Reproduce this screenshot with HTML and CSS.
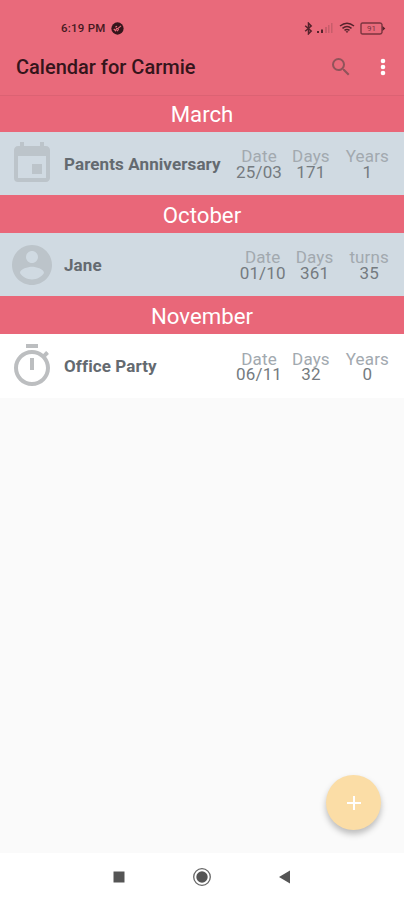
FILE: index.html
```html
<!DOCTYPE html>
<html lang="en">
<head>
    <meta charset="UTF-8">
    <meta name="viewport" content="width=device-width, initial-scale=1.0">
    <title>Calendar for Carmie</title>
    <link rel="stylesheet" href="styles.css">
</head>
<body>
    <header class="header">
        <div class="status-bar">
            <span class="time">6:19 PM</span>
            <svg class="badge" viewBox="0 0 14 14" width="13" height="13">
                <circle cx="7" cy="7" r="6.6" fill="#35151b"/>
                <path d="M3 7.5l2 1.8 1-2.3 1.5 0L10.8 4.2M6.5 9.8l1.8-2.2M4.8 5.5l1.7-.9" fill="none" stroke="#e96a7b" stroke-width="1.3"/>
            </svg>
            <div class="status-icons">
                <svg viewBox="0 0 9 13" width="9" height="13" fill="none" stroke="#54222b" stroke-width="1.5">
                    <path d="M1.2 3.8l6 5.2L4.5 11.8V1.2L7.2 4l-6 5.2"/>
                </svg>
                <svg class="signal" viewBox="0 0 16 12" width="16" height="12">
                    <path d="M0 9h2v2H0zM4 7.500h2V11H4z" fill="#54222b"/>
                    <path d="M8 5h2v6H8zM11 3h1.500v8H11zM14 1h1.500v10H14z" fill="#c85d6b"/>
                </svg>
                <svg class="wifi" viewBox="0 0 16 12" width="16" height="12" fill="none" stroke="#54222b" stroke-width="1.5">
                    <path d="M1 4Q8-1.500 15 4M3.500 6.300Q8 2.800 12.500 6.300M5.500 8.400Q8 6.500 10.500 8.400"/>
                    <path d="M6.500 9.300h3L8 11z" fill="#54222b" stroke="none"/>
                </svg>
                <svg class="battery" viewBox="0 0 26 13" width="26" height="13">
                    <path d="M2.500 1h17.500q1.500 0 2 1.500v8q-.5 1.500-2 1.500H2.500Q1 12 1 10.500v-8Q1 1 2.500 1z" fill="none" stroke="#7b353f" stroke-width="1.4"/>
                    <path d="M22.500 4l2.800 2.500-2.800 2.500z" fill="#54222b"/>
                    <text x="11.500" y="9.400" text-anchor="middle" class="battery-level">91</text>
                </svg>
            </div>
        </div>
        <div class="toolbar">
            <h1>Calendar for Carmie</h1>
            <svg class="search" viewBox="0 0 24 24" width="24" height="24" fill="#91535a">
                <path d="M15.500 14h-.79l-.28-.27A6.471 6.471 0 0 0 16 9.500 6.500 6.500 0 1 0 9.500 16c1.610 0 3.090-.59 4.230-1.570l.27.28v.79l5 4.990L20.490 19l-4.990-5zm-6 0C7.010 14 5 11.990 5 9.500S7.010 5 9.500 5 14 7.010 14 9.500 11.990 14 9.500 14z"/>
            </svg>
            <svg class="more" viewBox="0 0 24 24" width="24" height="24" fill="#fff">
                <circle cx="12" cy="6" r="2.300"/>
                <circle cx="12" cy="12" r="2.300"/>
                <circle cx="12" cy="18" r="2.300"/>
            </svg>
        </div>
    </header>

    <main class="events">
        <h2 class="month first">March</h2>
        <div class="event">
            <svg class="icon" viewBox="0 0 24 24">
                <path d="M17 12h-5v5h5v-5zM16 1v2H8V1H6v2H5c-1.110 0-1.990.9-1.990 2L3 19a2 2 0 0 0 2 2h14c1.100 0 2-.9 2-2V5c0-1.100-.9-2-2-2h-1V1h-2zm3 18H5V8h14v11z"/>
            </svg>
            <span class="name">Parents Anniversary</span>
            <div class="stat date"><span>Date</span><b>25/03</b></div>
            <div class="stat days"><span>Days</span><b>171</b></div>
            <div class="stat"><span>Years</span><b>1</b></div>
        </div>

        <h2 class="month">October</h2>
        <div class="event">
            <svg class="icon" viewBox="0 0 24 24">
                <path d="M12 2C6.480 2 2 6.480 2 12s4.480 10 10 10 10-4.480 10-10S17.520 2 12 2zm0 3c1.660 0 3 1.340 3 3s-1.340 3-3 3-3-1.340-3-3 1.340-3 3-3zm0 14.200c-2.500 0-4.710-1.280-6-3.220.030-1.990 4-3.080 6-3.080 1.990 0 5.970 1.090 6 3.080-1.290 1.940-3.500 3.220-6 3.220z"/>
            </svg>
            <span class="name">Jane</span>
            <div class="stat date"><span>Date</span><b>01/10</b></div>
            <div class="stat days"><span>Days</span><b>361</b></div>
            <div class="stat"><span>turns</span><b>35</b></div>
        </div>

        <h2 class="month">November</h2>
        <div class="event upcoming">
            <svg class="icon" viewBox="0 0 24 24">
                <path d="M15 1H9v2h6V1zm-4 13h2V8h-2v6zm8.030-6.610l1.420-1.420c-.43-.51-.9-.99-1.410-1.410l-1.420 1.420A8.962 8.962 0 0 0 12 4c-4.970 0-9 4.030-9 9s4.020 9 9 9 9-4.030 9-9c0-2.120-.74-4.070-1.970-5.610zM12 20c-3.870 0-7-3.130-7-7s3.130-7 7-7 7 3.130 7 7-3.130 7-7 7z"/>
            </svg>
            <span class="name">Office Party</span>
            <div class="stat date"><span>Date</span><b>06/11</b></div>
            <div class="stat days"><span>Days</span><b>32</b></div>
            <div class="stat"><span>Years</span><b>0</b></div>
        </div>
    </main>

    <button class="add-button" aria-label="Add event">
        <svg viewBox="0 0 24 24" width="24" height="24" fill="none" stroke="#fff" stroke-width="2">
            <path d="M12 5v14M5 12h14"/>
        </svg>
    </button>

    <nav class="nav-bar">
        <svg viewBox="0 0 20 20" width="20" height="20">
            <path d="M4.500 4.500h11v11h-11z" fill="#555"/>
        </svg>
        <svg viewBox="0 0 20 20" width="20" height="20">
            <circle cx="10" cy="10" r="8.300" fill="none" stroke="#666" stroke-width="1.300"/>
            <circle cx="10" cy="10" r="5.700" fill="#555"/>
        </svg>
        <svg viewBox="0 0 20 20" width="20" height="20">
            <path d="M15 3.500v13L4 10z" fill="#555"/>
        </svg>
    </nav>
</body>
</html>
```

FILE: styles.css
```css
* {
    box-sizing: border-box;
}

body {
    margin: 0;
    height: 100vh;
    display: flex;
    flex-direction: column;
    font-family: Roboto, "Liberation Sans", sans-serif;
    background-color: #fafafa;
    overflow: hidden;
}

svg {
    display: block;
    flex-shrink: 0;
}

/* Header */
.header {
    height: 95px;
    padding-top: 17px;
    background-color: #e96a7b;
}

.status-bar {
    display: flex;
    align-items: center;
    height: 22px;
    padding: 0 18px 0 61px;
}

.time {
    width: 44px;
    font-size: 11.5px;
    font-weight: 500;
    letter-spacing: 0.25px;
    white-space: nowrap;
    color: #45191f;
}

.badge {
    margin-left: 6px;
}

.status-icons {
    display: flex;
    align-items: center;
    margin-left: auto;
}

.signal {
    margin-left: 4px;
}

.wifi {
    margin-left: 6px;
}

.battery {
    margin-left: 5px;
}

.battery-level {
    font-size: 8px;
    fill: #7b353f;
}

.toolbar {
    display: flex;
    align-items: center;
    height: 56px;
    padding: 0 9px 0 16px;
}

h1 {
    margin: 0;
    font-size: 20px;
    font-weight: 500;
    color: #35151b;
}

.search {
    margin-left: auto;
}

.more {
    margin-left: 18px;
}

/* Event list */
.events {
    flex: 1;
}

.month {
    height: 38px;
    margin: 0;
    font-size: 22.2px;
    font-weight: 400;
    line-height: 41px;
    text-align: center;
    color: #fff;
    background-color: #e96779;
}

.first {
    height: 37px;
    line-height: 37px;
    border-top: 1px solid #dc6273;
}

.event {
    display: flex;
    align-items: center;
    height: 63px;
    padding: 0 15px 0 8px;
    background-color: #d0dae2;
}

.upcoming {
    height: 64px;
    background-color: #fff;
}

.icon {
    width: 48px;
    height: 48px;
    fill: #bcc4ca;
}

.upcoming .icon {
    fill: #bcbec0;
}

.name {
    flex: 1;
    margin-left: 8px;
    font-size: 17px;
    font-weight: 700;
    letter-spacing: 0.1px;
    color: #646a70;
    white-space: nowrap;
}

.stat {
    display: flex;
    flex-direction: column;
    align-items: center;
    padding-top: 2px;
    font-size: 17px;
    line-height: 15.5px;
    letter-spacing: 0.15px;
    color: #a2a9af;
}

.stat b {
    font-weight: 400;
    color: #757b80;
}

.date {
    margin-right: 10px;
}

.days {
    margin-right: 16px;
}

/* Floating button */
.add-button {
    position: absolute;
    right: 23px;
    bottom: 70px;
    width: 55px;
    height: 55px;
    display: flex;
    align-items: center;
    justify-content: center;
    padding: 0;
    border: none;
    border-radius: 50%;
    background-color: #fbdda6;
    box-shadow: 0 4px 6px rgba(0, 0, 0, 0.25);
}

.nav-bar {
    display: flex;
    align-items: center;
    justify-content: center;
    gap: 63px;
    height: 47px;
    background-color: #fff;
}
```
